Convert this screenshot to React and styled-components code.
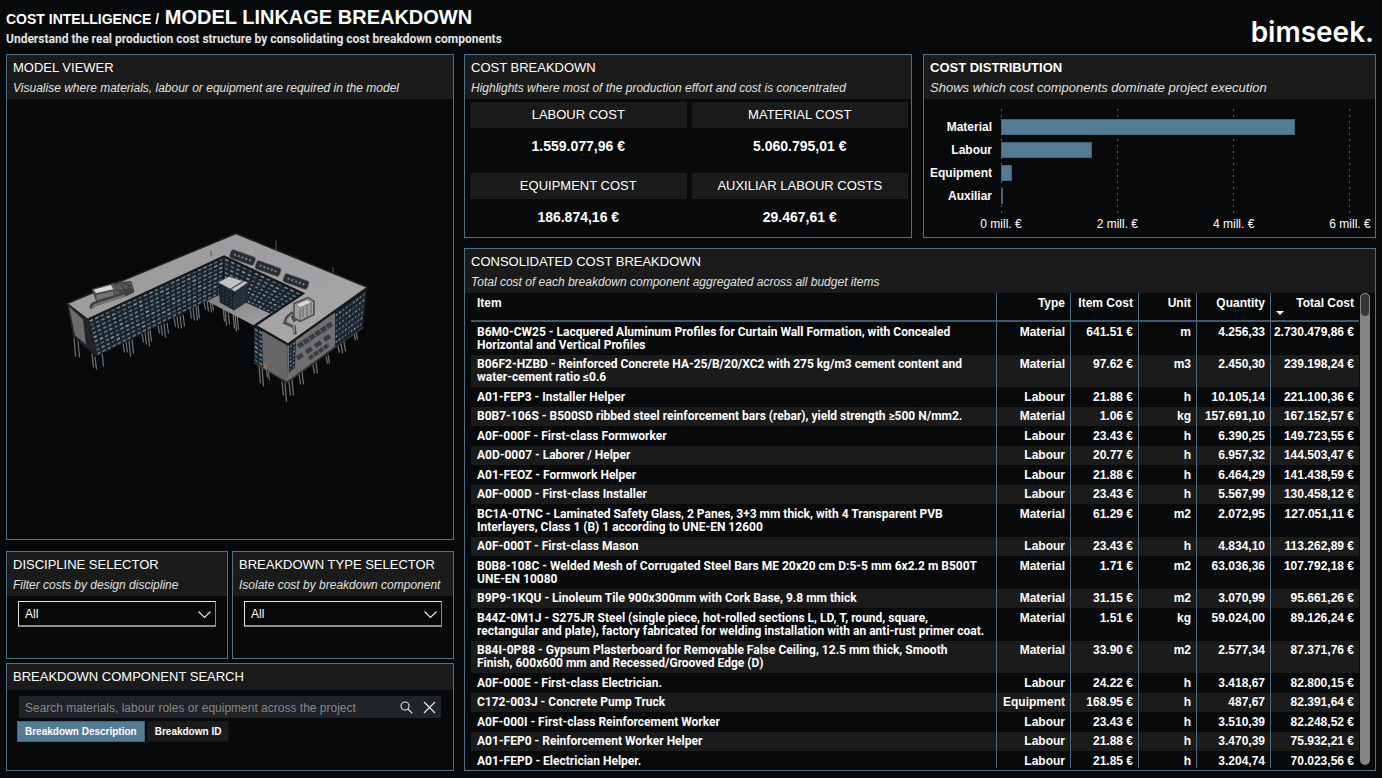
import React, { useState } from 'react'
import styled, { createGlobalStyle } from 'styled-components'

const GlobalStyle = createGlobalStyle`
  * { box-sizing: border-box; }
  body {
    margin: 0;
    background: #07090b;
    color: #fff;
    font-family: "Liberation Sans", Arial, sans-serif;
    font-size: 12px;
  }
  h1, h2, p { margin: 0; }
  button, input, select { font-family: inherit; color: inherit; }
`

const items = [
  ['B6M0-CW25 - Lacquered Aluminum Profiles for Curtain Wall Formation, with Concealed Horizontal and Vertical Profiles', 'Material', '641.51 €', 'm', '4.256,33', '2.730.479,86 €'],
  ['B06F2-HZBD - Reinforced Concrete HA-25/B/20/XC2 with 275 kg/m3 cement content and water-cement ratio ≤0.6', 'Material', '97.62 €', 'm3', '2.450,30', '239.198,24 €'],
  ['A01-FEP3 - Installer Helper', 'Labour', '21.88 €', 'h', '10.105,14', '221.100,36 €'],
  ['B0B7-106S - B500SD ribbed steel reinforcement bars (rebar), yield strength ≥500 N/mm2.', 'Material', '1.06 €', 'kg', '157.691,10', '167.152,57 €'],
  ['A0F-000F - First-class Formworker', 'Labour', '23.43 €', 'h', '6.390,25', '149.723,55 €'],
  ['A0D-0007 - Laborer / Helper', 'Labour', '20.77 €', 'h', '6.957,32', '144.503,47 €'],
  ['A01-FEOZ - Formwork Helper', 'Labour', '21.88 €', 'h', '6.464,29', '141.438,59 €'],
  ['A0F-000D - First-class Installer', 'Labour', '23.43 €', 'h', '5.567,99', '130.458,12 €'],
  ['BC1A-0TNC - Laminated Safety Glass, 2 Panes, 3+3 mm thick, with 4 Transparent PVB Interlayers, Class 1 (B) 1 according to UNE-EN 12600', 'Material', '61.29 €', 'm2', '2.072,95', '127.051,11 €'],
  ['A0F-000T - First-class Mason', 'Labour', '23.43 €', 'h', '4.834,10', '113.262,89 €'],
  ['B0B8-108C - Welded Mesh of Corrugated Steel Bars ME 20x20 cm D:5-5 mm 6x2.2 m B500T UNE-EN 10080', 'Material', '1.71 €', 'm2', '63.036,36', '107.792,18 €'],
  ['B9P9-1KQU - Linoleum Tile 900x300mm with Cork Base, 9.8 mm thick', 'Material', '31.15 €', 'm2', '3.070,99', '95.661,26 €'],
  ['B44Z-0M1J - S275JR Steel (single piece, hot-rolled sections L, LD, T, round, square, rectangular and plate), factory fabricated for welding installation with an anti-rust primer coat.', 'Material', '1.51 €', 'kg', '59.024,00', '89.126,24 €'],
  ['B84I-0P88 - Gypsum Plasterboard for Removable False Ceiling, 12.5 mm thick, Smooth Finish,\u00a0600x600 mm and Recessed/Grooved Edge (D)', 'Material', '33.90 €', 'm2', '2.577,34', '87.371,76 €'],
  ['A0F-000E - First-class Electrician.', 'Labour', '24.22 €', 'h', '3.418,67', '82.800,15 €'],
  ['C172-003J - Concrete Pump Truck', 'Equipment', '168.95 €', 'h', '487,67', '82.391,64 €'],
  ['A0F-000I - First-class Reinforcement Worker', 'Labour', '23.43 €', 'h', '3.510,39', '82.248,52 €'],
  ['A01-FEP0 - Reinforcement Worker Helper', 'Labour', '21.88 €', 'h', '3.470,39', '75.932,21 €'],
  ['A01-FEPD - Electrician Helper.', 'Labour', '21.85 €', 'h', '3.204,74', '70.023,56 €'],
]

const costs = [
  ['LABOUR COST', '1.559.077,96 €'],
  ['MATERIAL COST', '5.060.795,01 €'],
  ['EQUIPMENT COST', '186.874,16 €'],
  ['AUXILIAR LABOUR COSTS', '29.467,61 €'],
]

const distribution = [
  ['Material', 5060795],
  ['Labour', 1559078],
  ['Equipment', 186874],
  ['Auxiliar', 29468],
]

const ticks = ['0 mill. €', '2 mill. €', '4 mill. €', '6 mill. €']

const Page = styled.div`
  height: 100vh;
  display: flex;
  flex-direction: column;
  padding: 5px 6px 7px;
`
const TopBar = styled.header`
  display: flex;
  justify-content: space-between;
  height: 49px;
`
const PageTitle = styled.h1`
  font-size: 20px;
  line-height: 24px;
  span { font-size: 14px; }
`
const PageText = styled.p`
  font-family: Roboto, sans-serif;
  font-weight: bold;
  line-height: 16px;
  color: #e4e4e4;
`
const Logo = styled.div`
  padding: 9px 2px 0 0;
  font: 600 28px/36px Inter, sans-serif;
`
const Columns = styled.main`
  flex: 1;
  min-height: 0;
  display: grid;
  grid-template-columns: 448fr 912fr;
  gap: 10px;
`
const LeftColumn = styled.div`
  display: flex;
  flex-direction: column;
  gap: 4px;
  min-height: 0;
`
const RightColumn = styled.div`
  display: flex;
  flex-direction: column;
  gap: 10px;
  min-width: 0;
  min-height: 0;
`
const TopPanels = styled.div`
  display: grid;
  grid-template-columns: 448fr 453fr;
  gap: 11px;
  min-height: 184px;
`
const Selectors = styled.div`
  display: grid;
  grid-template-columns: 1fr 1fr;
  gap: 4px;
  margin-top: 7px;
`
const Panel = styled.section`
  display: flex;
  flex-direction: column;
  min-width: 0;
  min-height: ${p => (p.$fill ? 0 : 108)}px;
  flex: ${p => (p.$fill ? 1 : 'none')};
  border: 1px solid #4d7189;
`
const PanelHead = styled.div`
  min-height: 26px;
  padding: 5px 6px 2px;
  background: #1b1b1b;
  white-space: nowrap;
`
const PanelTitle = styled.h2`
  font-size: 13px;
  line-height: 16px;
  font-weight: ${p => (p.$bold ? 'bold' : 'normal')};
`
const PanelText = styled.p`
  margin-top: 3px;
  line-height: 18px;
  font-size: ${p => (p.$large ? 13 : 12)}px;
  font-style: italic;
  color: #e0e0e0;
`
const Viewer = styled.div`
  flex: 1;
  min-height: 0;
  display: flex;
  justify-content: center;
  svg { width: 100%; height: 100%; }
`
const CostGrid = styled.div`
  display: grid;
  grid-template-columns: 1fr 1fr;
  gap: 9px 5px;
  padding: 3px 3px 0 5px;
  text-align: center;
`
const CostLabel = styled.div`
  background: #1b1b1b;
  font-size: 13px;
  line-height: 26px;
`
const CostValue = styled.div`
  font-size: 14px;
  line-height: 36px;
  font-weight: bold;
`
const Chart = styled.div`
  position: relative;
  margin: 10px 25px 0 0;
  padding: 6px 0 8px;
`
const GridLines = styled.div`
  position: absolute;
  inset: 0 0 0 77px;
  display: flex;
  justify-content: space-between;
  i {
    width: 1px;
    background: repeating-linear-gradient(#55595c 0 2px, transparent 2px 6px);
  }
`
const BarRow = styled.div`
  position: relative;
  display: grid;
  grid-template-columns: 68px 1fr;
  gap: 9px;
  align-items: center;
  height: 23px;
  font-weight: bold;
  text-align: right;
`
const Bar = styled.div`
  height: 16px;
  background: #557a94;
  border: 1px solid #40647d;
`
const Axis = styled.div`
  display: flex;
  justify-content: space-between;
  margin: 1px 25px 0 77px;
  line-height: 16px;
  span {
    width: 0;
    display: flex;
    justify-content: center;
    white-space: nowrap;
  }
`
const SelectBox = styled.div`
  position: relative;
  margin: 5px 11px 0;
  svg {
    position: absolute;
    right: 5px;
    top: 9px;
    pointer-events: none;
  }
`
const Select = styled.select`
  display: block;
  width: 100%;
  height: 26px;
  padding: 0 6px;
  appearance: none;
  background: #07090b;
  border: 1px solid #e6e6e6;
  border-right-color: #8c8c90;
  border-bottom: 2px solid #8c8c90;
  border-radius: 0;
  font-size: 12px;
`
const SearchBox = styled.div`
  display: flex;
  align-items: center;
  gap: 10px;
  height: 22px;
  margin: 6px 12px 0;
  padding: 0 5px 0 6px;
  background: #202327;
`
const SearchInput = styled.input`
  flex: 1;
  min-width: 0;
  padding: 2px 0 0;
  border: 0;
  outline: 0;
  background: none;
  font-size: 12px;
  &::placeholder { color: #85878a; opacity: 1; }
`
const IconButton = styled.button`
  display: flex;
  padding: 0;
  border: 0;
  background: none;
`
const Tabs = styled.div`
  display: flex;
  gap: 2px;
  margin: 3px 10px 0;
`
const Tab = styled.button`
  height: 21px;
  padding: 0 7px;
  border: 1px solid ${p => (p.$active ? '#40647d' : '#151515')};
  background: ${p => (p.$active ? '#557a94' : '#1b1b1b')};
  font-size: 10px;
  font-weight: bold;
`
const TableArea = styled.div`
  flex: 1;
  min-height: 0;
  display: flex;
  gap: 1px;
  margin: 0 5px 2px 6px;
  overflow: hidden;
`
const TableClip = styled.div`
  flex: 1;
  min-width: 0;
  overflow: hidden;
`
const Table = styled.table`
  width: 100%;
  table-layout: fixed;
  border-collapse: separate;
  border-spacing: 0;
  font-weight: bold;
  line-height: 13px;
  th, td {
    padding: 4px 5px 3px 2px;
    text-align: right;
    vertical-align: top;
    white-space: nowrap;
    border-left: 1px solid #49697f;
  }
  th:first-child, td:first-child {
    padding-left: 6px;
    border-left: 0;
    text-align: left;
    white-space: normal;
  }
  td:first-child { font-family: Roboto, sans-serif; }
  th {
    position: relative;
    height: 29px;
    border-bottom: 2px solid #40586a;
  }
  tbody tr:nth-child(even) td {
    background: #1b1b1b;
    padding-top: 3px;
  }
`
const Col = styled.col`
  width: ${p => p.$w}px;
`
const SortMark = styled.svg`
  position: absolute;
  left: 5px;
  bottom: 5px;
`
const Track = styled.div`
  width: 10px;
  margin-bottom: 3px;
  border-radius: 5px;
  background: #848484;
`
const Thumb = styled.div`
  height: 24px;
  border: 1px solid #848484;
  border-radius: 5px;
  background: #363636;
`

// point inside a four-cornered face, u along the top edge, v downwards
const at = ([a, b, c, d], u, v) => [0, 1].map(i =>
  (a[i] * (1 - u) + b[i] * u) * (1 - v) + (d[i] * (1 - u) + c[i] * u) * v)

function Windows({ face, cols, rows, wide = 0.62, tall = 0.42 }) {
  const cells = []
  const shades = ['#6d8799', '#4c6679', '#7c93a2', '#3f586b', '#5a7587']
  for (let r = 0; r < rows; r++) {
    for (let c = 0; c < cols; c++) {
      const u = (c + 0.2) / cols, u2 = (c + 0.2 + wide) / cols
      const v = (r + 0.3) / rows, v2 = (r + 0.3 + tall) / rows
      const pts = [at(face, u, v), at(face, u2, v), at(face, u2, v2), at(face, u, v2)]
      cells.push(<polygon key={r + '-' + c} points={pts.join(' ')} fill={shades[(r * 3 + c * 7 + r * c) % 5]} />)
    }
  }
  return <g><polygon points={face.join(' ')} fill="#1b242c" />{cells}</g>
}

const pillars = [
  [74, 338, 19], [78, 341, 17], [92, 354, 14], [95, 357, 13], [102, 353, 14],
  [123, 344, 9], [126, 342, 11], [129, 341, 16], [132, 340, 14],
  [142, 334, 9], [145, 332, 13], [148, 331, 16], [150, 330, 12],
  [158, 326, 8], [161, 325, 11], [164, 324, 14], [167, 323, 11],
  [174, 318, 9], [177, 317, 12], [180, 316, 13], [183, 315, 12],
  [190, 309, 10], [193, 308, 13], [196, 307, 14], [198, 306, 13],
  [204, 302, 8], [207, 301, 11], [210, 301, 12], [212, 302, 9],
  [223, 307, 15], [225, 308, 18], [228, 310, 15], [233, 313, 16], [235, 314, 18], [237, 315, 15],
  [259, 366, 18], [262, 367, 20], [266, 369, 9], [268, 370, 11],
  [282, 382, 14], [285, 383, 19], [289, 382, 14], [292, 380, 16],
  [299, 374, 11], [302, 372, 13], [313, 365, 9], [316, 363, 11],
  [326, 357, 7], [328, 355, 9], [338, 347, 6], [341, 344, 10], [344, 342, 10],
  [354, 333, 8], [356, 331, 9],
]

function Building() {
  return (
    <svg viewBox="7 100 446 439" role="img" aria-label="Building model">
      <defs>
        <linearGradient id="roof" x1="0" y1="0" x2="1" y2="1">
          <stop offset="0" stopColor="#989698" />
          <stop offset="0.5" stopColor="#a19fa1" />
          <stop offset="1" stopColor="#aaa8aa" />
        </linearGradient>
        <linearGradient id="floor" x1="0" y1="0" x2="1" y2="1">
          <stop offset="0" stopColor="#7d7c7d" />
          <stop offset="1" stopColor="#a5a3a5" />
        </linearGradient>
      </defs>
      <g stroke="#6e6d6c" strokeWidth="1.3">
        {pillars.map(([x, y, h]) => <path key={x} d={`M${x} ${y}l1.5 ${h}`} />)}
      </g>
      <path d="M206 301 223 291 250 300 274 314 256 327z" fill="url(#floor)" />
      <Windows face={[[88, 320], [224, 257], [222, 294], [97, 357]]} cols={25} rows={9} />
      <Windows face={[[224, 257], [303, 294], [272, 315], [224, 293]]} cols={13} rows={8} wide={0.55} />
      <path d="M67 304 88 320 97 357 91 352 73 338z" fill="#232326" />
      <path d="M69 307 83 320 86 345 75 336z" fill="#6c6a6d" />
      <path d="M218 283 235 292 234 311 220 303z" fill="#1b222b" />
      <path d="M235 292 248 284 248 302 234 311z" fill="#242c36" />
      <path d="M223 287v17M227 289v18M231 291v18M238 292v16M243 289v16" stroke="#46545f" strokeWidth="0.7" strokeDasharray="2 1.5" />
      <path d="M218 283 229 277 248 283 235 292z" fill="#c4c3c4" stroke="#504f50" strokeWidth="0.6" />
      <path d="M230 290 243 282" stroke="#454446" strokeWidth="1.3" />
      <Windows face={[[254, 327], [263, 332], [263, 368], [254, 362]]} cols={2} rows={8} />
      <path d="M262 331 288 345 287 382 263 369z" fill="#676568" />
      <path d="M264 369v-5h3v7z" fill="#92704f" />
      <path d="M288 345 335 312 335 347 287 382z" fill="#706e71" />
      <path d="M335 312 367 289 363 328 335 347z" fill="#211f24" />
      <Windows face={[[289, 346], [296, 341], [295, 368], [289, 373]]} cols={2} rows={7} />
      <Windows face={[[335, 314], [366, 291], [362, 327], [335, 346]]} cols={9} rows={6} wide={0.55} tall={0.35} />
      <g stroke="#3c3b3f" fill="none">
        <path d="M298 347 332 324" strokeWidth="5" strokeDasharray="6 1" />
        <path d="M297 359 332 335" strokeWidth="4.5" strokeDasharray="7 4" />
        <path d="M309 359 329 345" strokeWidth="4" strokeDasharray="5 1" />
        <path d="M336 323 365 302M336 334 364 314" stroke="#39282a" strokeWidth="1.3" />
        <path d="M254 363 287 383 335 348 363 328" stroke="#403f42" strokeWidth="1.2" />
      </g>
      <path
        d="M67 304 236 234 368 288 288 345 255 326 303 294 224 257 88 320z"
        fill="url(#roof)" stroke="#202124" strokeWidth="1.5"
      />
      <path d="M88 320 224 257 303 294 255 326 288 345 368 288" fill="none" stroke="#17191b" strokeWidth="2.2" />
      {[[242.5, 258], [268, 269], [296, 282]].map(([x, y]) => (
        <g key={x} transform={`translate(${x} ${y}) rotate(20)`}>
          <rect x="-13" y="-4.5" width="26" height="9" rx="2.5" fill="#292d31" stroke="#747476" strokeWidth="0.6" />
          <path d="M-9 0H9" stroke="#6f8290" strokeWidth="2" strokeDasharray="2 2" />
        </g>
      ))}
      <g stroke="#3e3e40">
        <path d="M92 290 113 284 131 282 134 292 123 296 96 300z" fill="#59595b" />
        <path d="M93 290 111 285 114 290 96 294z" fill="#d7d7d7" strokeWidth="0.7" />
        <path d="M96 295 114 291v6l-18 4z" fill="#747476" strokeWidth="0.8" />
        <path d="M115 286 120 282 130 286 124 294 116 290M119 292 131 289M121 285 128 294" fill="none" strokeWidth="1.5" />
        <path d="M92 309Q91 305 96 304L125 295 133 291" fill="none" strokeWidth="4.5" />
        <path d="M93 309Q93 306 97 305L125 296" fill="none" stroke="#727173" strokeWidth="2.4" />
      </g>
      <g stroke="#4b4a4c" fill="#9d9c9e">
        <path d="M294 304 308 298 314 302V315L300 322 294 318z" strokeWidth="1.5" />
        <path d="M296 305 307 300 312 303 300 308z" fill="#d8d7d8" strokeWidth="0.5" />
        <path d="M300 309v12M303 308v10M307 306v11M311 304v10" strokeWidth="0.7" />
        <path d="M293 313 287 318 285 323 294 327 295 335M292 316 295 322" fill="none" strokeWidth="3.5" />
        <path d="M292 315 288 319 287 322 294 326 294 334" fill="none" stroke="#98979a" strokeWidth="1.4" />
      </g>
      <path d="M276 241v10M211 251v6M333 268v5" stroke="#555457" />
    </svg>
  )
}

const Head = ({ title, text, bold, large }) => (
  <PanelHead>
    <PanelTitle $bold={bold}>{title}</PanelTitle>
    {text && <PanelText $large={large}>{text}</PanelText>}
  </PanelHead>
)

const Selector = ({ title, text }) => (
  <Panel>
    <Head title={title} text={text} />
    <SelectBox>
      <Select aria-label={title}>
        <option>All</option>
      </Select>
      <svg width="13" height="9" viewBox="0 0 13 9" fill="none" stroke="#e6e6e6" strokeWidth="1.2">
        <path d="M0.5 1.5 6.5 7.5 12.5 1.5" />
      </svg>
    </SelectBox>
  </Panel>
)

function App() {
  const [query, setQuery] = useState('')
  const [searchBy, setSearchBy] = useState('Breakdown Description')

  return (
    <Page>
      <GlobalStyle />
      <TopBar>
        <div>
          <PageTitle><span>COST INTELLIGENCE /</span> MODEL LINKAGE BREAKDOWN</PageTitle>
          <PageText>Understand the real production cost structure by consolidating cost breakdown components</PageText>
        </div>
        <Logo>bimseek.</Logo>
      </TopBar>
      <Columns>
        <LeftColumn>
          <Panel $fill>
            <Head title="MODEL VIEWER" text="Visualise where materials, labour or equipment are required in the model" />
            <Viewer><Building /></Viewer>
          </Panel>
          <Selectors>
            <Selector title="DISCIPLINE SELECTOR" text="Filter costs by design discipline" />
            <Selector title="BREAKDOWN TYPE SELECTOR" text="Isolate cost by breakdown component" />
          </Selectors>
          <Panel>
            <Head title="BREAKDOWN COMPONENT SEARCH" />
            <SearchBox>
              <SearchInput
                aria-label="Search"
                placeholder="Search materials, labour roles or equipment across the project"
                value={query}
                onChange={e => setQuery(e.target.value)}
              />
              <IconButton aria-label="Run search">
                <svg width="13" height="13" viewBox="0 0 13 13" fill="none" stroke="#e6e6e6" strokeWidth="1.1">
                  <circle cx="5" cy="5" r="4" />
                  <path d="M8 8 12.3 12.3" />
                </svg>
              </IconButton>
              <IconButton aria-label="Clear search" onClick={() => setQuery('')}>
                <svg width="13" height="13" viewBox="0 0 13 13" fill="none" stroke="#e6e6e6" strokeWidth="1.2">
                  <path d="M1 1 12 12M12 1 1 12" />
                </svg>
              </IconButton>
            </SearchBox>
            <Tabs>
              {['Breakdown Description', 'Breakdown ID'].map(name => (
                <Tab key={name} $active={searchBy === name} onClick={() => setSearchBy(name)}>{name}</Tab>
              ))}
            </Tabs>
          </Panel>
        </LeftColumn>
        <RightColumn>
          <TopPanels>
            <Panel>
              <Head title="COST BREAKDOWN" text="Highlights where most of the production effort and cost is concentrated" />
              <CostGrid>
                {costs.map(([label, value]) => (
                  <div key={label}>
                    <CostLabel>{label}</CostLabel>
                    <CostValue>{value}</CostValue>
                  </div>
                ))}
              </CostGrid>
            </Panel>
            <Panel>
              <Head bold large title="COST DISTRIBUTION" text="Shows which cost components dominate project execution" />
              <Chart>
                <GridLines>{ticks.map(t => <i key={t} />)}</GridLines>
                {distribution.map(([label, value]) => (
                  <BarRow key={label}>
                    <span>{label}</span>
                    <Bar style={{ width: value / 60000 + '%' }} />
                  </BarRow>
                ))}
              </Chart>
              <Axis>{ticks.map(t => <span key={t}>{t}</span>)}</Axis>
            </Panel>
          </TopPanels>
          <Panel $fill>
            <Head title="CONSOLIDATED COST BREAKDOWN" text="Total cost of each breakdown component aggregated across all budget items" />
            <TableArea>
              <TableClip>
                <Table>
                  <colgroup>
                    <col />
                    <Col $w={74} />
                    <Col $w={68} />
                    <Col $w={58} />
                    <Col $w={74} />
                    <Col $w={89} />
                  </colgroup>
                  <thead>
                    <tr>
                      <th>Item</th>
                      <th>Type</th>
                      <th>Item Cost</th>
                      <th>Unit</th>
                      <th>Quantity</th>
                      <th>
                        Total Cost
                        <SortMark width="8" height="4"><path d="M0 0H8L4 4z" fill="#fff" /></SortMark>
                      </th>
                    </tr>
                  </thead>
                  <tbody>
                    {items.map(row => (
                      <tr key={row[0]}>{row.map((cell, i) => <td key={i}>{cell}</td>)}</tr>
                    ))}
                  </tbody>
                </Table>
              </TableClip>
              <Track><Thumb /></Track>
            </TableArea>
          </Panel>
        </RightColumn>
      </Columns>
    </Page>
  )
}

export default App
